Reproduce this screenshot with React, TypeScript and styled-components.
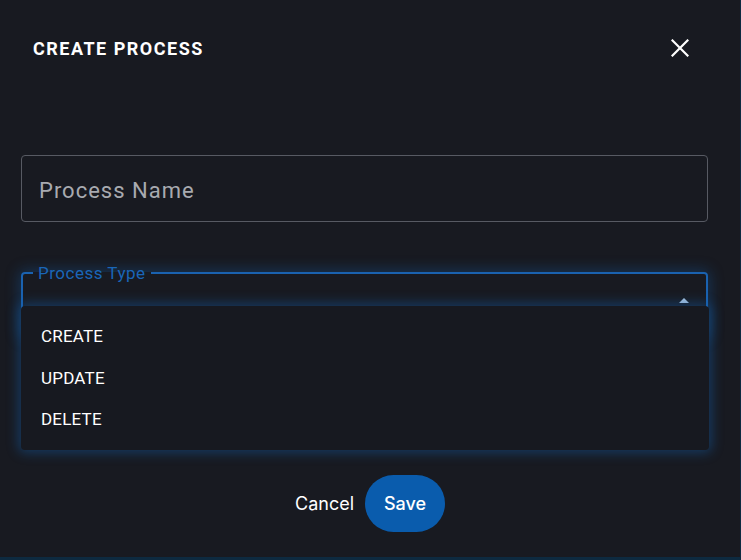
import React from "react";
import styled, { createGlobalStyle } from "styled-components";

const Global = createGlobalStyle`
  html, body { margin: 0; padding: 0; background: #0d2a40; }
  body { width: 741px; height: 560px; overflow: hidden; font-family: Roboto, "Noto Sans", sans-serif; }
  * { box-sizing: border-box; }
`;

const Dialog = styled.div`
  position: relative;
  width: 740px;
  height: 557px;
  background: #181a21;
  display: flex;
  flex-direction: column;
`;

const Header = styled.div`
  display: flex;
  align-items: center;
  justify-content: space-between;
  padding: 0 50px 0 33px;
  height: 96px;
`;

const Title = styled.h2`
  margin: 0;
  font-family: Roboto, sans-serif;
  font-weight: 700;
  font-size: 18px;
  color: #ffffff;
  letter-spacing: 1.5px;
`;

const CloseBtn = styled.button`
  background: none;
  border: none;
  padding: 0;
  width: 20px;
  height: 20px;
  display: flex;
  align-items: center;
  justify-content: center;
  cursor: pointer;
`;

const Content = styled.div`
  padding: 59px 32px 0 21px;
  display: flex;
  flex-direction: column;
  gap: 50px;
`;

const TextField = styled.div`
  height: 67px;
  border: 1px solid #575a63;
  border-radius: 4px;
  display: flex;
  align-items: center;
  padding-left: 17px;
  padding-top: 3px;
`;

const Placeholder = styled.span`
  font-family: Roboto, sans-serif;
  font-size: 22px;
  color: #a8aab0;
  letter-spacing: 1px;
`;

const SelectWrap = styled.div`
  position: relative;
  height: 65px;
`;

const Fieldset = styled.fieldset`
  margin: 0;
  position: absolute;
  inset: -7px 0 0 0;
  border: 2px solid #1a62b0;
  border-radius: 4px;
  padding: 0 10px;
  box-shadow: 0 0 14px 2px rgba(20, 100, 180, 0.35);
`;

const Legend = styled.legend`
  padding: 0 5px;
  font-family: Roboto, sans-serif;
  font-size: 17px;
  color: #1a66b8;
  line-height: 16px;
  letter-spacing: 0.5px;
`;

const Arrow = styled.div`
  position: absolute;
  right: 19px;
  top: 26px;
  width: 0;
  height: 0;
  border-left: 5px solid transparent;
  border-right: 5px solid transparent;
  border-bottom: 5px solid #a9c3e0;
`;

const Menu = styled.ul`
  position: absolute;
  left: 21px;
  top: 306px;
  width: 688px;
  height: 144px;
  margin: 0;
  padding: 9px 0;
  list-style: none;
  background: #171920;
  border-radius: 4px;
  box-shadow: 0 0 12px 3px rgba(20, 95, 170, 0.45);
`;

const MenuItem = styled.li`
  height: 41.5px;
  display: flex;
  align-items: center;
  padding-left: 20px;
  padding-top: 1px;
  font-family: Roboto, sans-serif;
  font-size: 17px;
  color: #ffffff;
  letter-spacing: 0.2px;
`;

const Actions = styled.div`
  margin-top: auto;
  margin-bottom: 25px;
  display: flex;
  justify-content: center;
  align-items: center;
  gap: 11px;
`;

const CancelBtn = styled.button`
  background: none;
  border: none;
  padding: 0;
  font-family: Inter, sans-serif;
  font-size: 18px;
  color: #ffffff;
  cursor: pointer;
`;

const SaveBtn = styled.button`
  width: 80px;
  height: 57px;
  border: none;
  border-radius: 29px;
  background: #0a5cad;
  font-family: Inter, sans-serif;
  font-size: 18px;
  font-weight: 500;
  color: #ffffff;
  cursor: pointer;
`;

export default function App() {
  return (
    <>
      <Global />
      <Dialog>
        <Header>
          <Title>CREATE PROCESS</Title>
          <CloseBtn aria-label="close">
            <svg width="18" height="18" viewBox="0 0 18 18">
              <path d="M1.5 1.5 L16.5 16.5 M16.5 1.5 L1.5 16.5" stroke="#fff" strokeWidth="2.2" strokeLinecap="square" />
            </svg>
          </CloseBtn>
        </Header>
        <Content>
          <TextField>
            <Placeholder>Process Name</Placeholder>
          </TextField>
          <SelectWrap>
            <Fieldset>
              <Legend>Process Type</Legend>
            </Fieldset>
            <Arrow />
          </SelectWrap>
        </Content>
        <Actions>
          <CancelBtn>Cancel</CancelBtn>
          <SaveBtn>Save</SaveBtn>
        </Actions>
        <Menu>
          <MenuItem>CREATE</MenuItem>
          <MenuItem>UPDATE</MenuItem>
          <MenuItem>DELETE</MenuItem>
        </Menu>
      </Dialog>
    </>
  );
}
